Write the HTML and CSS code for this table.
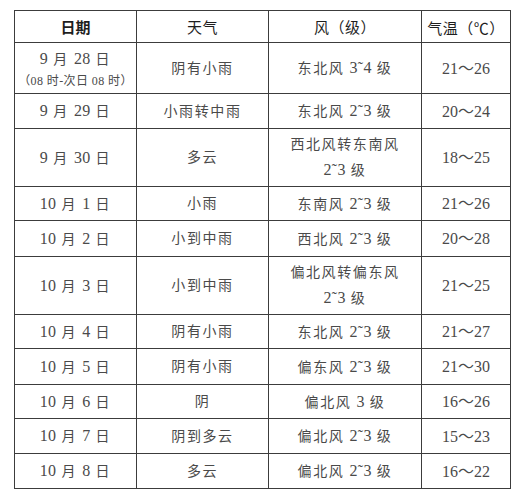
FILE: index.html
```html
<!DOCTYPE html>
<html lang="zh-CN">
<head>
<meta charset="utf-8">
<link rel="stylesheet" href="styles.css">
</head>
<body>
<div class="page">
<table class="weather">
  <colgroup>
    <col class="c-date"><col class="c-sky"><col class="c-wind"><col class="c-temp">
  </colgroup>
  <thead>
    <tr class="h31">
      <th class="bold">日期</th>
      <th>天气</th>
      <th>风（级）</th>
      <th>气温（<span class="cjk">℃</span>）</th>
    </tr>
  </thead>
  <tbody>
    <tr class="h51">
      <td><div><span class="n">9</span> 月 <span class="n">28</span> 日</div><div class="small">（08 时-次日 08 时）</div></td>
      <td>阴有小雨</td>
      <td>东北风 <span class="n">3˜4</span> 级</td>
      <td class="temp">21～26</td>
    </tr>
    <tr class="h35">
      <td><span class="n">9</span> 月 <span class="n">29</span> 日</td>
      <td>小雨转中雨</td>
      <td>东北风 <span class="n">2˜3</span> 级</td>
      <td class="temp">20～24</td>
    </tr>
    <tr class="h58">
      <td><span class="n">9</span> 月 <span class="n">30</span> 日</td>
      <td>多云</td>
      <td><div>西北风转东南风</div><div><span class="n">2˜3</span> 级</div></td>
      <td class="temp">18～25</td>
    </tr>
    <tr class="h34">
      <td><span class="n">10</span> 月 <span class="n">1</span> 日</td>
      <td>小雨</td>
      <td>东南风 <span class="n">2˜3</span> 级</td>
      <td class="temp">21～26</td>
    </tr>
    <tr class="h36">
      <td><span class="n">10</span> 月 <span class="n">2</span> 日</td>
      <td>小到中雨</td>
      <td>西北风 <span class="n">2˜3</span> 级</td>
      <td class="temp">20～28</td>
    </tr>
    <tr class="h58">
      <td><span class="n">10</span> 月 <span class="n">3</span> 日</td>
      <td>小到中雨</td>
      <td><div>偏北风转偏东风</div><div><span class="n">2˜3</span> 级</div></td>
      <td class="temp">21～25</td>
    </tr>
    <tr class="h34">
      <td><span class="n">10</span> 月 <span class="n">4</span> 日</td>
      <td>阴有小雨</td>
      <td>东北风 <span class="n">2˜3</span> 级</td>
      <td class="temp">21～27</td>
    </tr>
    <tr class="h36">
      <td><span class="n">10</span> 月 <span class="n">5</span> 日</td>
      <td>阴有小雨</td>
      <td>偏东风 <span class="n">2˜3</span> 级</td>
      <td class="temp">21～30</td>
    </tr>
    <tr class="h34">
      <td><span class="n">10</span> 月 <span class="n">6</span> 日</td>
      <td>阴</td>
      <td>偏北风 <span class="n">3</span> 级</td>
      <td class="temp">16～26</td>
    </tr>
    <tr class="h35">
      <td><span class="n">10</span> 月 <span class="n">7</span> 日</td>
      <td>阴到多云</td>
      <td>偏北风 <span class="n">2˜3</span> 级</td>
      <td class="temp">15～23</td>
    </tr>
    <tr class="h35">
      <td><span class="n">10</span> 月 <span class="n">8</span> 日</td>
      <td>多云</td>
      <td>偏北风 <span class="n">2˜3</span> 级</td>
      <td class="temp">16～22</td>
    </tr>
  </tbody>
</table>
</div>
</body>
</html>
```

FILE: styles.css
```css
html, body {
  margin: 0;
  padding: 0;
  background: #ffffff;
}
.page {
  padding: 10px 0 0 14px;
}
.weather {
  border-collapse: collapse;
  table-layout: fixed;
  width: 496px;
  border: 1.5px solid #5a5a5a;
  font-family: "Liberation Serif", "Noto Sans CJK SC", serif;
  color: #4a4a4a;
}
.c-date { width: 122px; }
.c-sky { width: 132px; }
.c-wind { width: 153px; }
.c-temp { width: 89px; }
.weather th,
.weather td {
  border: 1px solid #3c3c3c;
  padding: 0;
  text-align: center;
  vertical-align: middle;
  font-size: 14px;
  letter-spacing: 1.6px;
  line-height: 25px;
  font-weight: normal;
}
.weather th {
  color: #1e1e1e;
  font-size: 15px;
  letter-spacing: 0.5px;
  padding-top: 4px;
}
.weather th.bold {
  font-weight: bold;
  letter-spacing: 0;
}
.cjk {
  font-family: "Noto Sans CJK SC", sans-serif;
}
.n {
  font-size: 16px;
  letter-spacing: 0.3px;
}
.weather td.temp {
  font-size: 16px;
  letter-spacing: 0;
}
.weather td .small {
  font-size: 12px;
  letter-spacing: 0.4px;
  line-height: 18px;
}
.h31 { height: 31px; }
.h34 { height: 34px; }
.h35 { height: 35px; }
.h36 { height: 36px; }
.h51 { height: 51px; }
.h58 { height: 58px; }
```
